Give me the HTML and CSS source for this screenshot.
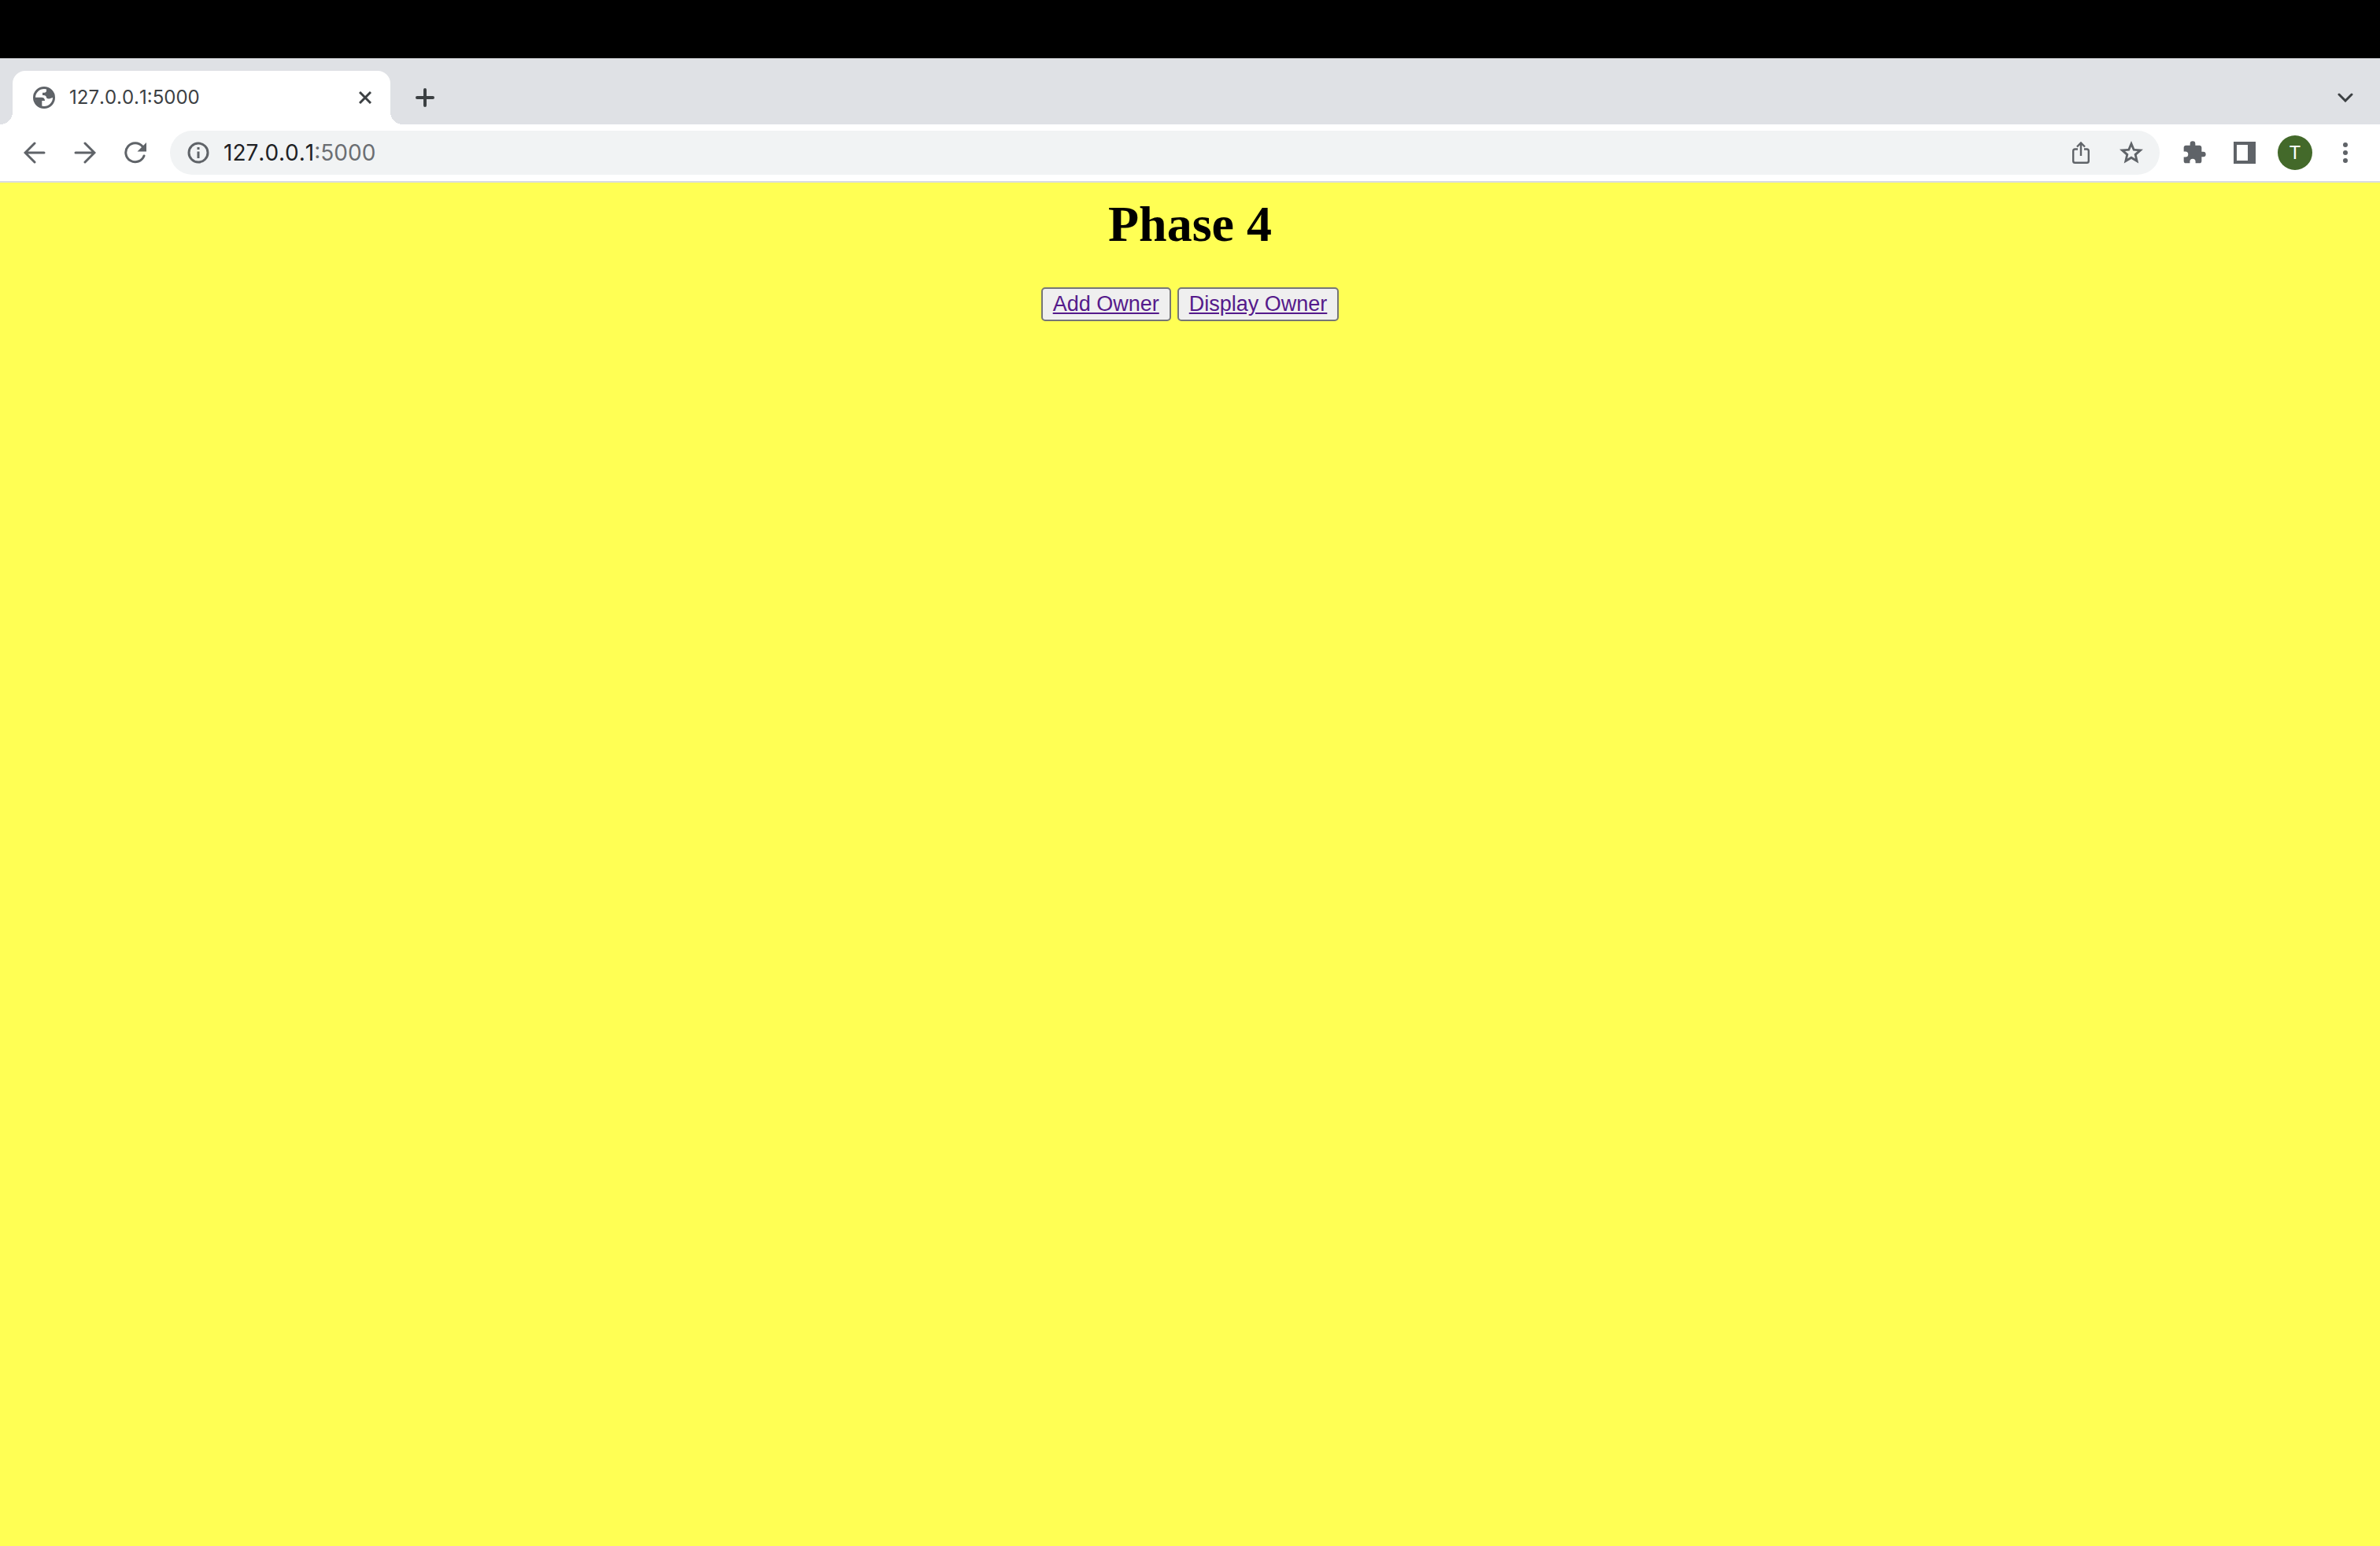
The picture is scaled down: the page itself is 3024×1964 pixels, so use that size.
FILE: index.html
```html
<!DOCTYPE html>
<html lang="en">
<head>
<meta charset="utf-8">
<title>127.0.0.1:5000</title>
<link rel="stylesheet" href="styles.css">
</head>
<body>
<header class="browser">
  <div class="notch"></div>
  <div class="tab-strip">
    <div class="tab">
      <svg class="globe" viewBox="0 0 28 28" aria-hidden="true"><circle cx="14" cy="14" r="12.500" fill="#fff" stroke="#5f6368" stroke-width="3"/><path fill="#5f6368" d="M2 13.800h8.500c3 0 4.500 1.500 4.500 4.200h-3.700v7.500L5 23zM17 2v3c0 1.800-1 2.800-2.700 2.800h-2.300v3.200c3 0 4.500.4 4.800 2.200.3 1.600 1.200 2.200 3.200 2.200 2 0 3.500-.8 5.500-1.600L25 7z"/></svg>
      <span class="tab-title">127.0.0.1:5000</span>
      <button class="icon-button close" aria-label="Close tab"><svg viewBox="0 0 16 16"><path d="M1 1l14 14M15 1L1 15" fill="none" stroke="#3c4043" stroke-width="3"/></svg></button>
    </div>
    <button class="icon-button new-tab" aria-label="New tab"><svg viewBox="0 0 24 24"><path d="M12 2v20M2 12h20" fill="none" stroke="#3c4043" stroke-width="4" stroke-linecap="round"/></svg></button>
    <button class="icon-button tab-search" aria-label="Search tabs"><svg viewBox="0 0 20 12"><path d="M2 2l8 8 8-8" fill="none" stroke="#3c4043" stroke-width="3" stroke-linecap="round"/></svg></button>
  </div>
  <div class="toolbar">
    <div class="nav">
      <button class="icon-button" aria-label="Back"><svg viewBox="0 0 28 28"><path d="M26 14H3M14 2L2 14l12 12" fill="none" stroke="#5f6368" stroke-width="3" stroke-linecap="round"/></svg></button>
      <button class="icon-button" aria-label="Forward"><svg viewBox="0 0 28 28"><path d="M2 14h23M14 2l12 12-12 12" fill="none" stroke="#5f6368" stroke-width="3" stroke-linecap="round"/></svg></button>
      <button class="icon-button" aria-label="Reload"><svg viewBox="0 0 28 28"><path d="M25 18A12 12 0 1 1 23 6" fill="none" stroke="#5f6368" stroke-width="3" stroke-linecap="round"/><path d="M28 1v11.500H16.500z" fill="#5f6368"/></svg></button>
    </div>
    <div class="address">
      <button class="icon-button" aria-label="Site information"><svg viewBox="0 0 28 28"><circle cx="14" cy="14" r="12" fill="none" stroke="#5f6368" stroke-width="3"/><path d="M12.500 7h3v3h-3zM12.500 12.500h3V21h-3z" fill="#5f6368"/></svg></button>
      <a class="url" href="#">127.0.0.1<span class="port">:5000</span></a>
      <button class="icon-button" aria-label="Share"><svg viewBox="0 0 28 28"><path d="M10 9.500H6.500Q4.200 9.500 4.200 12V24.500q0 2.300 2.300 2.300h15q2.300 0 2.300-2.300V12q0-2.500-2.300-2.500H18M14 18V2M9 6.500l5-5 5 5" fill="none" stroke="#5f6368" stroke-width="2.400"/></svg></button>
      <button class="icon-button star" aria-label="Bookmark"><svg viewBox="0 0 24 24"><path fill="#5f6368" fill-rule="evenodd" d="M22 9.240l-7.190-.62L12 2 9.190 8.630 2 9.240l5.460 4.730L5.820 21 12 17.270 18.180 21l-1.630-7.030zM12 15l-3.300 2 .9-3.800-2.900-2.500 3.800-.3L12 6.900l1.500 3.500 3.800.3-2.900 2.500.9 3.800z"/></svg></button>
    </div>
    <div class="actions">
      <button class="icon-button puzzle" aria-label="Extensions"><svg viewBox="0 0 24 24"><path fill="#5f6368" d="M20.500 11H19V7c0-1.100-.9-2-2-2h-4V3.500a2.500 2.500 0 0 0-5 0V5H4c-1.100 0-2 .9-2 2v3.800h1.500a2.700 2.700 0 0 1 0 5.400H2V20c0 1.100.9 2 2 2h3.800v-1.500a2.700 2.700 0 0 1 5.400 0V22H17c1.100 0 2-.9 2-2v-4h1.500a2.500 2.500 0 0 0 0-5z"/></svg></button>
      <button class="icon-button" aria-label="Side panel"><svg viewBox="0 0 28 28"><path d="M0 0h28v28H0zM4 4v20h14V4z" fill="#5f6368" fill-rule="evenodd"/></svg></button>
      <button class="avatar" aria-label="Profile">T</button>
      <button class="icon-button" aria-label="Menu"><svg viewBox="0 0 28 28"><g fill="#5f6368"><circle cx="14" cy="4" r="3"/><circle cx="14" cy="14" r="3"/><circle cx="14" cy="24" r="3"/></g></svg></button>
    </div>
  </div>
</header>
<main class="page">
  <h1 class="heading">Phase 4</h1>
  <div class="choices">
    <a class="choice" href="#add">Add Owner</a>
    <a class="choice" href="#display">Display Owner</a>
  </div>
</main>
</body>
</html>
```
FILE: styles.css
```css
* { box-sizing: border-box; }
body {
  margin: 0;
  min-height: 100vh;
  display: flex;
  flex-direction: column;
  background: #ffff54;
}
.browser { font-family: Inter, sans-serif; font-kerning: none; }
.notch { height: 74px; background: #000; }
.tab-strip {
  display: flex;
  align-items: center;
  height: 84px;
  padding: 16px 32px 0 16px;
  background: #dfe1e5;
}
.tab {
  position: relative;
  display: flex;
  align-items: center;
  width: 480px;
  height: 68px;
  padding: 0 24px 0 26px;
  border-radius: 16px 16px 0 0;
  background: #fff;
}
.tab::before,
.tab::after {
  content: "";
  position: absolute;
  bottom: 0;
  width: 16px;
  height: 16px;
}
.tab::before {
  right: 100%;
  background: radial-gradient(circle at 0 0, transparent 16px, #fff 16px);
}
.tab::after {
  left: 100%;
  background: radial-gradient(circle at 100% 0, transparent 16px, #fff 16px);
}
.globe { width: 28px; height: 28px; }
.tab-title {
  flex: 1;
  margin-left: 18px;
  font-size: 24px;
  line-height: 32px;
  color: #3c4043;
}
.icon-button {
  width: 28px;
  height: 28px;
  padding: 0;
  border: 0;
  background: none;
}
.icon-button svg { display: block; width: 100%; height: 100%; }
.close { width: 16px; height: 16px; }
.new-tab { width: 24px; height: 24px; margin-left: 32px; }
.tab-search { width: 20px; height: 12px; margin-left: auto; margin-right: 2px; }
.toolbar {
  display: flex;
  align-items: center;
  height: 74px;
  padding: 0 30px;
  border-bottom: 2px solid #dadce0;
  background: #fff;
}
.nav { display: flex; gap: 36px; }
.address {
  flex: 1;
  display: flex;
  align-items: center;
  height: 56px;
  margin: 0 28px 0 30px;
  padding: 0 18px 0 22px;
  border-radius: 28px;
  background: #f1f3f4;
}
.url {
  flex: 1;
  margin-left: 18px;
  font-size: 28px;
  line-height: 36px;
  color: #202124;
  text-decoration: none;
}
.port { color: #6b6e72; }
.star { width: 36px; height: 36px; margin-left: 32px; }
.actions { display: flex; align-items: center; gap: 28px; }
.puzzle { width: 32px; height: 32px; margin-right: 6px; }
.avatar {
  width: 44px;
  height: 44px;
  padding: 0;
  border: 0;
  border-radius: 50%;
  background: #43692a;
  color: #fff;
  font: 24px/44px Roboto, sans-serif;
}
.page { padding: 16px; text-align: center; }
.heading {
  margin: 0;
  font: bold 64px/74px "Liberation Serif", serif;
  color: #000;
}
.choices {
  display: flex;
  justify-content: center;
  gap: 8px;
  margin-top: 43px;
}
.choice {
  padding: 4px 13px;
  border: 2px solid #767676;
  border-radius: 5px;
  background: #efefef;
  font: 27px/31px "Liberation Sans", sans-serif;
  color: #551a8b;
  text-decoration: underline;
}
```
